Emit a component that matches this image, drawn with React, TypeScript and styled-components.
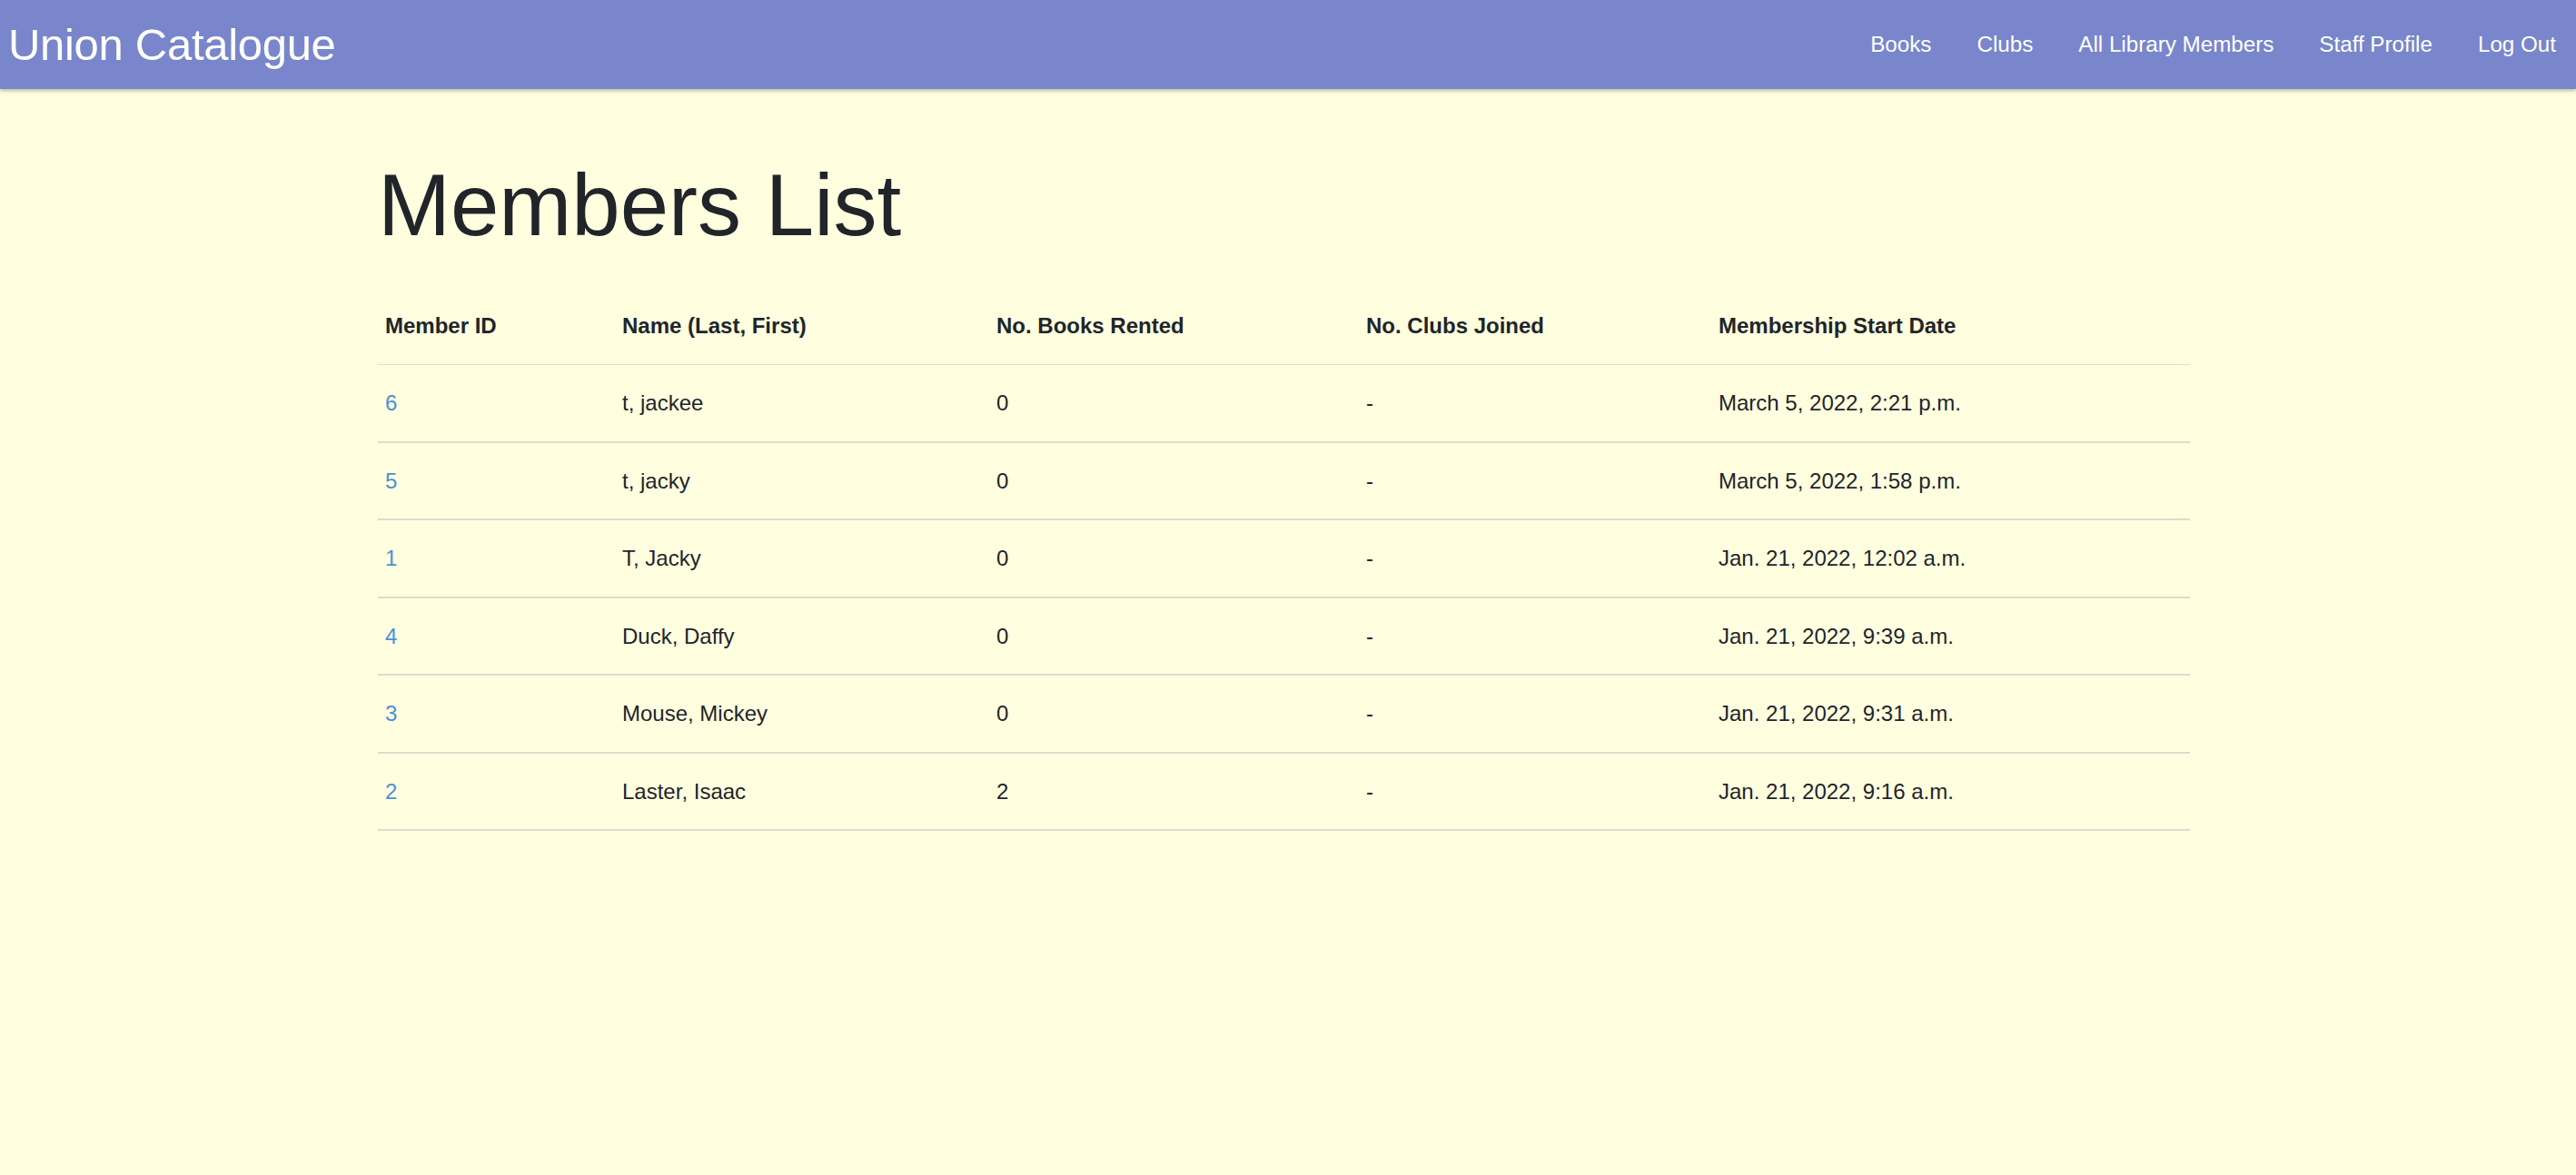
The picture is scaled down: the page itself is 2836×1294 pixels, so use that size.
import React from "react";
import styled, { createGlobalStyle } from "styled-components";

const GlobalStyle = createGlobalStyle`
  html, body {
    margin: 0;
    padding: 0;
    background: #ffffe0;
    font-family: "Liberation Sans", Arial, Helvetica, sans-serif;
    color: #212529;
  }
  #root { min-height: 1294px; }
`;

const NavBar = styled.nav`
  display: flex;
  align-items: center;
  justify-content: space-between;
  height: 98px;
  padding: 0 22px 0 9px;
  background: #7986cb;
  box-shadow: 0 2px 4px rgba(0, 0, 0, 0.28);
  position: relative;
  z-index: 1;
`;

const Brand = styled.a`
  font-size: 49px;
  letter-spacing: -0.3px;
  color: #ffffff;
  text-decoration: none;
  line-height: 1;
`;

const NavLinks = styled.div`
  display: flex;
  align-items: center;
  gap: 50px;
`;

const NavLink = styled.a`
  font-size: 24.2px;
  color: #ffffff;
  text-decoration: none;
  line-height: 1;
`;

const Main = styled.main`
  padding-left: 416px;
`;

const Heading = styled.h1`
  font-size: 96px;
  font-weight: 400;
  line-height: 1.2;
  margin: 70px 0 34px;
  color: #212529;
`;

const Table = styled.table`
  width: 1995px;
  border-collapse: collapse;
  table-layout: fixed;
  font-size: 24px;
`;

const HeadCell = styled.th`
  text-align: left;
  font-weight: 700;
  padding: 30px 8px;
  line-height: 24px;
  border-bottom: 1px solid #dedecd;
  color: #212529;
`;

const Cell = styled.td`
  text-align: left;
  padding: 30px 8px;
  line-height: 23.5px;
  border-bottom: 2px solid #dcdcca;
  color: #212529;
`;

const IdLink = styled.a`
  color: #4a90d9;
  text-decoration: none;
`;

type Member = {
  id: number;
  name: string;
  books: number;
  clubs: string;
  start: string;
};

const members: Member[] = [
  { id: 6, name: "t, jackee", books: 0, clubs: "-", start: "March 5, 2022, 2:21 p.m." },
  { id: 5, name: "t, jacky", books: 0, clubs: "-", start: "March 5, 2022, 1:58 p.m." },
  { id: 1, name: "T, Jacky", books: 0, clubs: "-", start: "Jan. 21, 2022, 12:02 a.m." },
  { id: 4, name: "Duck, Daffy", books: 0, clubs: "-", start: "Jan. 21, 2022, 9:39 a.m." },
  { id: 3, name: "Mouse, Mickey", books: 0, clubs: "-", start: "Jan. 21, 2022, 9:31 a.m." },
  { id: 2, name: "Laster, Isaac", books: 2, clubs: "-", start: "Jan. 21, 2022, 9:16 a.m." },
];

const columns = [
  { label: "Member ID", width: 261 },
  { label: "Name (Last, First)", width: 412 },
  { label: "No. Books Rented", width: 407 },
  { label: "No. Clubs Joined", width: 388 },
  { label: "Membership Start Date", width: 527 },
];

export default function App() {
  return (
    <>
      <GlobalStyle />
      <NavBar>
        <Brand href="#">Union Catalogue</Brand>
        <NavLinks>
          <NavLink href="#">Books</NavLink>
          <NavLink href="#">Clubs</NavLink>
          <NavLink href="#">All Library Members</NavLink>
          <NavLink href="#">Staff Profile</NavLink>
          <NavLink href="#">Log Out</NavLink>
        </NavLinks>
      </NavBar>
      <Main>
        <Heading>Members List</Heading>
        <Table>
          <colgroup>
            {columns.map((c) => (
              <col key={c.label} style={{ width: c.width }} />
            ))}
          </colgroup>
          <thead>
            <tr>
              {columns.map((c) => (
                <HeadCell key={c.label}>{c.label}</HeadCell>
              ))}
            </tr>
          </thead>
          <tbody>
            {members.map((m) => (
              <tr key={m.id}>
                <Cell>
                  <IdLink href="#">{m.id}</IdLink>
                </Cell>
                <Cell>{m.name}</Cell>
                <Cell>{m.books}</Cell>
                <Cell>{m.clubs}</Cell>
                <Cell>{m.start}</Cell>
              </tr>
            ))}
          </tbody>
        </Table>
      </Main>
    </>
  );
}
